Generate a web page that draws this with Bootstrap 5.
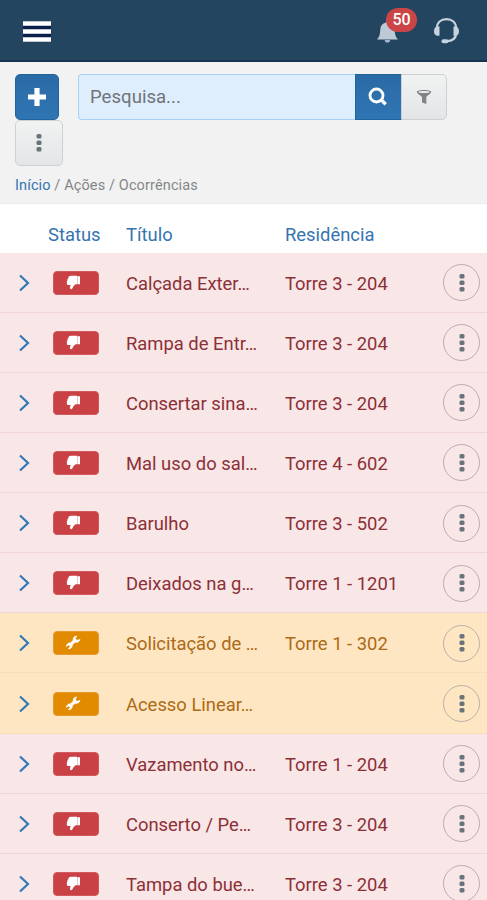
<!DOCTYPE html>
<html lang="pt-BR">
<head>
<meta charset="utf-8">
<meta name="viewport" content="width=device-width, initial-scale=1">
<title>Ocorrências</title>
<link href="https://cdn.jsdelivr.net/npm/bootstrap@5.3.0/dist/css/bootstrap.min.css" rel="stylesheet">
<style>
html,body{height:900px;overflow:hidden}
body{font-family:Roboto,"Liberation Sans",sans-serif;background:#fff;color:#777}
svg{display:block;flex:none}
.topbar{height:62px;background:#24455f;border-bottom:2px solid #15344f;padding:2px 27px 0 22px}
.burger{width:30px;height:23px}
.alerts{width:24px;height:26px;margin-right:33px}
.headset{margin-bottom:2px}
.count{position:absolute;left:10px;top:-10px;width:31px;height:24px;border-radius:12px;background:#cb4546;color:#fff;font-size:16px;font-weight:500;line-height:24px;text-align:center}
.tools{height:142px;background:#f2f2f2;border-bottom:1px solid #ebebeb;padding:12px 15px 0}
.btn.sq{border-radius:5px;padding:0;height:46px;display:flex;align-items:center;justify-content:center}
.btn.blue{background:linear-gradient(#2a6ba6,#2f75b3);border:1px solid #20649c}
.btn.gray{background:linear-gradient(#f1f2f2,#e3e5e7);border:1px solid #ced0d2}
.w-add{width:44px}.w-more{width:48px}
.search{width:369px;height:46px;margin-left:19px}
.search .form-control{background:#dfeefd;border:1.5px solid #a6d2f8;border-right:0;border-radius:4px 0 0 4px;font-size:18.6px;padding:2px 11px 0;color:#666}
.search .form-control::placeholder{color:#707478;opacity:1}
.search .w-go{width:47px;border-radius:0;padding-right:2px}
.search .w-filter{width:46px;border-radius:0 5px 5px 0;margin-left:0}
.crumbs{font-size:14.5px;line-height:20px;letter-spacing:.12px;margin-top:10px;color:#83878a}
.crumbs a,.heads{color:#3474b1}
.heads{height:48.5px;padding-top:13.5px}
.line{display:grid;grid-template-columns:48px 78px 159px 158px 37px;align-items:center;font-size:18.4px;white-space:nowrap}
.item{height:60.15px;padding-top:1px;border-bottom:1.5px solid #efd5d9;background:#f9e6e6;color:#8c3038}
.item.warn{background:#ffe6c3;border-color:#f8ddb8;color:#ab6a15}
.words{padding-top:1.5px}
.arrow{margin-left:18px}
.state{width:46px;height:24px;border-radius:4px;background:#c94144;border:1px solid #d35a5c;margin-left:5px;padding:0 0 1px 12px}
.warn .state{background:#e28a00;border-color:#e89a2e}
.dots{width:37px;height:37px;border:1px solid #b9adb3;border-radius:50%;background:none;padding:0}
.warn .dots{border-color:#b9b0a5}
</style>
<script src="https://cdn.jsdelivr.net/npm/bootstrap@5.3.0/dist/js/bootstrap.bundle.min.js"></script>
</head>
<body>
<svg width="0" height="0" class="position-absolute" aria-hidden="true">
<symbol id="chev" viewBox="0 0 12 18"><path d="M2 1.500 10 9 2 16.500" fill="none" stroke="#3079b9" stroke-width="2.200"/></symbol>
<symbol id="down" viewBox="0 0 15 15"><path d="M5 .8H11V9.200H9.800C8.200 10.200 7 11.500 6.300 13.600 6 14.600 3.700 14.300 3.900 12.500 4 11.500 4.400 10.700 4.700 10H2.300C.8 10 .4 8.600 1.100 7.700.5 6.900.8 5.800 1.500 5.400 1.200 4.400 1.700 3.500 2.400 3.200 2.400 1.600 3.500.8 5 .8ZM11.300 1.200H14V9.200H11.300Z" fill="#fff"/></symbol>
<symbol id="wrench" viewBox="0 0 14 14"><path d="M13 4.200C12.400 6.400 10.300 7.200 8.500 6.700L5.800 9.200C6 11.300 4.500 13 2.300 12.800L3.900 11 3.300 9.600 1.900 9.300.6 10.700C.5 8.500 2.200 7.100 4.200 7.400L6.800 4.900C6.400 2.900 7.700 1 10 1L8.700 2.800 9.300 4.600 11.100 5Z" fill="#fff" stroke="#fff" stroke-width=".8"/></symbol>
<symbol id="kebab" viewBox="0 0 6 20"><g fill="#68747a"><rect x=".5" y="1" width="5" height="4.600" rx="1.500"/><rect x=".5" y="7.500" width="5" height="4.600" rx="1.500"/><rect x=".5" y="14" width="5" height="4.600" rx="1.500"/></g></symbol>
</svg>

<nav class="topbar d-flex align-items-center justify-content-between">
  <svg class="burger" viewBox="0 0 30 23"><path d="M1 1h28v21H1z" fill="#0b1e4a"/><path d="M1 3.500h28M1 11.500h28M1 19.500h28" stroke="#fff" stroke-width="4.600"/></svg>
  <div class="d-flex align-items-center">
    <div class="alerts position-relative">
      <svg width="24" height="26" viewBox="0 0 24 26"><path d="M1 21.500C4 18.500 4 15 4.300 11.500 4.600 7.300 7.200 5 10.200 4.600V3.400a1.400 1.400 0 0 1 2.800 0V4.600C16 5 18.300 7.300 18.600 11.500 19 15 19 18.500 22 21.500Z" fill="#bdc9d5"/><path d="M8.800 22h5.200a2.600 2.600 0 0 1-5.200 0Z" fill="#a5b8d2"/></svg>
      <span class="count">50</span>
    </div>
    <svg class="headset" width="27" height="27" viewBox="0 0 27 27"><path d="M4 12V11C4 5.400 8 2.200 13.500 2.200S23 5.400 23 11v1M23.300 17C22.500 21.500 19 24 14 24.200" fill="none" stroke="#c6d2dd" stroke-width="2.300"/><path d="M6.500 9.500v9.200H5C2.300 18.700 1 17 1 14.200S2.300 9.500 5 9.500ZM20.500 9.500v9.200H22c2.700 0 4-1.700 4-4.500S24.700 9.500 22 9.500Z" fill="#c6d2dd"/><rect x="8.500" y="22.200" width="7" height="4" rx="2" fill="#c6d2dd"/></svg>
  </div>
</nav>

<section class="tools">
  <div class="d-flex flex-wrap">
    <button class="btn sq blue w-add" aria-label="Adicionar"><svg width="20" height="20" viewBox="0 0 20 20"><path d="M10 1v18M1 10h18" stroke="#fff" stroke-width="5.200"/></svg></button>
    <div class="search input-group flex-nowrap">
      <input class="form-control" placeholder="Pesquisa...">
      <button class="btn sq blue w-go" aria-label="Buscar"><svg width="20" height="20" viewBox="0 0 20 20"><circle cx="8.500" cy="8.500" r="6.500" fill="none" stroke="#fff" stroke-width="2.800"/><path d="m13 12.800 4.700 4.500" stroke="#fff" stroke-width="3.400"/></svg></button>
      <button class="btn sq gray w-filter" aria-label="Filtrar"><svg width="16" height="16" viewBox="0 0 16 16"><path d="M.8 2.500C3 .5 13 .5 15.200 2.500 15.400 4.200 12 6 10.300 8v7L6 13.500V8C4 6 .6 4.200.8 2.500Z" fill="#808488"/><ellipse cx="8" cy="2.900" rx="5.600" ry="1" fill="#eceeef"/></svg></button>
    </div>
    <button class="btn sq gray w-more" aria-label="Mais"><svg width="6" height="20"><use href="#kebab"/></svg></button>
  </div>
  <div class="crumbs"><a class="text-decoration-none" href="#">Início</a> / Ações / Ocorrências</div>
</section>

<div class="line heads"><span></span><span>Status</span><span>Título</span><span>Residência</span></div>
<main id="list"></main>
<script>
const items = [
  ['Calçada Exter…', 'Torre 3 - 204'], ['Rampa de Entr…', 'Torre 3 - 204'],
  ['Consertar sina…', 'Torre 3 - 204'], ['Mal uso do sal…', 'Torre 4 - 602'],
  ['Barulho', 'Torre 3 - 502'], ['Deixados na g…', 'Torre 1 - 1201'],
  ['Solicitação de …', 'Torre 1 - 302', 'warn'], ['Acesso Linear…', '', 'warn'],
  ['Vazamento no…', 'Torre 1 - 204'], ['Conserto / Pe…', 'Torre 3 - 204'],
  ['Tampa do bue…', 'Torre 3 - 204']
];
document.getElementById('list').innerHTML = items.map(([title, home, kind = '']) => `
  <div class="line item ${kind}">
    <svg class="arrow" width="12" height="18"><use href="#chev"/></svg>
    <span class="state d-flex align-items-center"><svg width="15" height="15"><use href="#${kind ? 'wrench' : 'down'}"/></svg></span>
    <span class="words">${title}</span><span class="words">${home}</span>
    <button class="dots d-flex align-items-center justify-content-center" aria-label="Opções"><svg width="6" height="20"><use href="#kebab"/></svg></button>
  </div>`).join('');
</script>
</body>
</html>
